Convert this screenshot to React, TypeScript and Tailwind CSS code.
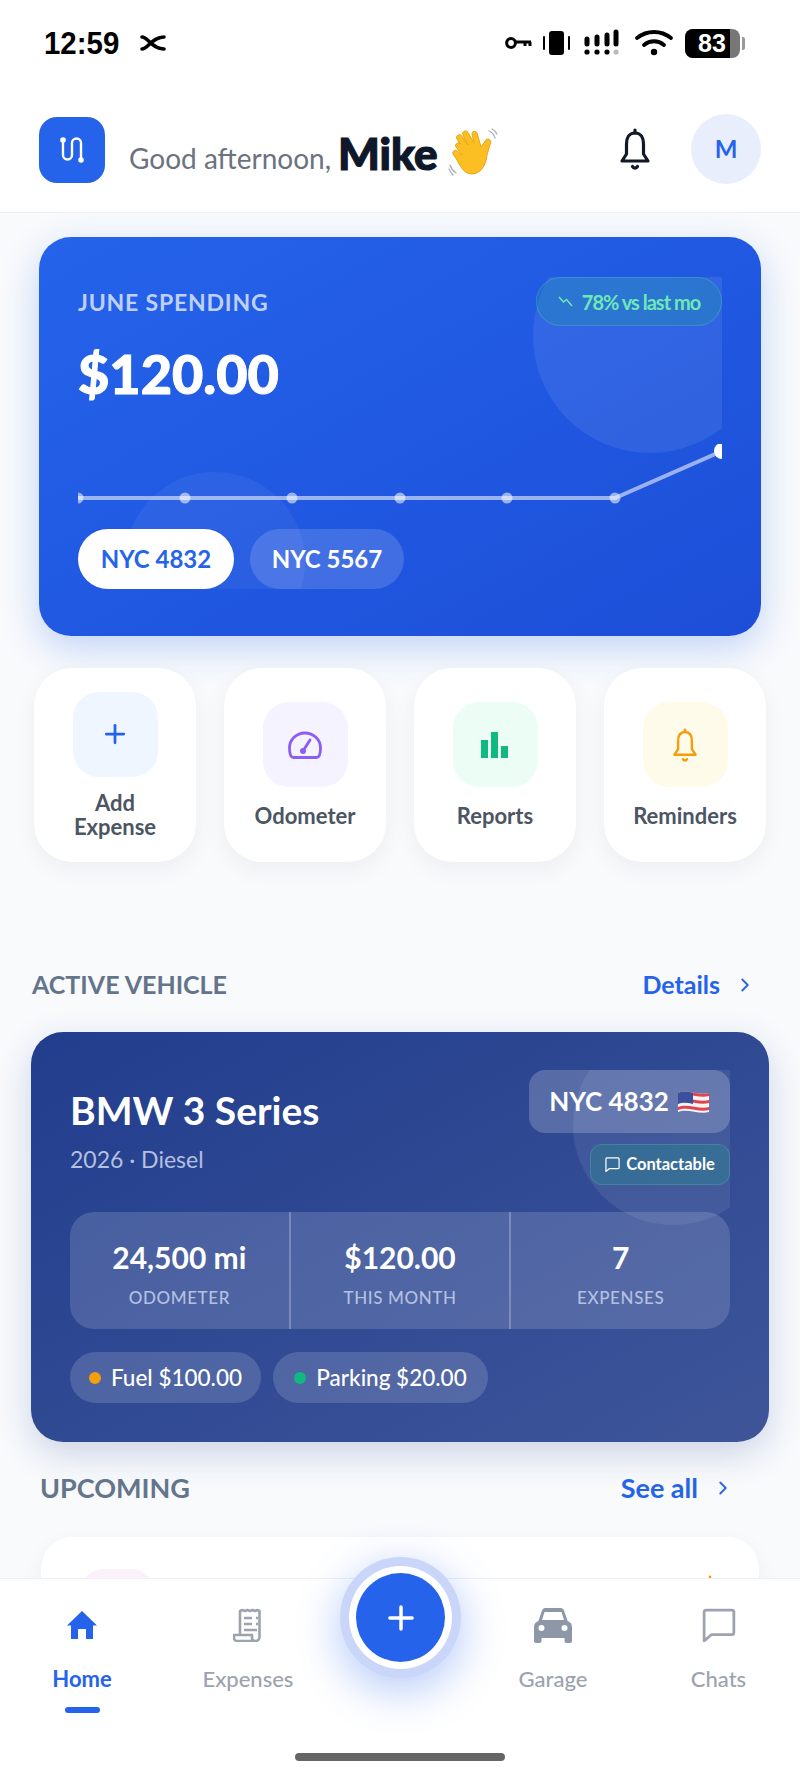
import React from 'react';
import { ChevronRight, Plus } from 'lucide-react';

function BellIcon({ width, height, color, strokeWidth = 3 }: { width: number; height: number; color: string; strokeWidth?: number }) {
  return (
    <svg width={width} height={height} viewBox="0 0 32 42" fill="none" stroke={color} strokeWidth={strokeWidth} strokeLinejoin="round" strokeLinecap="round">
      <path d="M16 2v3" />
      <path d="M16 5C10 5 7.5 10 7.5 16v10L3 33h26l-4.5-7V16C24.500 10 22 5 16 5Z" />
      <path d="M13.500 38.500a2.800 2.800 0 0 0 5 0" />
    </svg>
  );
}

function ChatIcon({ size, color, strokeWidth }: { size: number; color: string; strokeWidth: number }) {
  return (
    <svg width={size} height={size} viewBox="0 0 32 32" fill="none" stroke={color} strokeWidth={strokeWidth} strokeLinejoin="round">
      <path d="M4 2h24a2 2 0 0 1 2 2v19a2 2 0 0 1-2 2H9l-7 6V4a2 2 0 0 1 2-2Z" />
    </svg>
  );
}

function StatusBar() {
  return (
    <div className="h-[76px] flex items-center justify-between pl-[44px] pr-[55px] pt-[10px] bg-white font-['Liberation_Sans',sans-serif]">
      <div className="flex items-center gap-[20px]">
        <span className="text-[32px] font-bold text-black leading-none scale-x-[0.92] origin-left w-[76px] whitespace-nowrap">12:59</span>
        <svg width="26" height="16" viewBox="0 0 26 16" fill="none" stroke="#000" strokeWidth="3.6" strokeLinecap="round">
          <path d="M2 2c6 0 10 12 22 12" />
          <path d="M2 14c6 0 10-12 22-12" />
        </svg>
      </div>
      <div className="flex items-center">
        <svg width="176" height="30" viewBox="0 0 176 30" className="mr-[4px]">
          <g fill="none" stroke="#000" strokeWidth="3">
            <circle cx="6" cy="15" r="4.4" />
            <path d="M11 14h15M20 14v4M25 14v4" />
          </g>
          <rect x="44" y="3" width="15" height="24" rx="3" fill="#000" />
          <path d="M39 9v12M64 9v12" stroke="#000" strokeWidth="2" strokeLinecap="round" />
          <g stroke="#000" strokeWidth="5" strokeLinecap="round">
            <path d="M82 11v5M92 9v7M102 7v9M111 4v12" />
          </g>
          <circle cx="82" cy="24" r="2.6" />
          <circle cx="92" cy="24" r="2.6" />
          <circle cx="102" cy="24" r="2.6" />
          <circle cx="111" cy="24" r="2.6" fill="#bbb" />
          <g fill="none" stroke="#000" strokeWidth="3.8" strokeLinecap="round">
            <path d="M132 10c10-8 24-8 34 0" />
            <path d="M139 17c6-5 14-5 20 0" />
          </g>
          <circle cx="149" cy="24" r="3.2" />
        </svg>
        <div className="flex items-center gap-[2px]">
          <div className="w-[55px] h-[29px] rounded-[8px] bg-[#777] overflow-hidden">
            <div className="w-[45px] h-full bg-black flex items-center justify-center text-white text-[25px] font-bold leading-none pl-[9px]">83</div>
          </div>
          <div className="w-[3px] h-[13px] rounded-r-[2px] bg-[#999]" />
        </div>
      </div>
    </div>
  );
}

function WaveHand() {
  return (
    <svg width="50" height="50" viewBox="0 0 50 50" fill="none">
      <path d="M14 27 L8 19 a2.6 2.6 0 0 1 4.4-2.8 L9 11 a2.8 2.8 0 0 1 4.8-2.9 L20 17 L15 7 a2.8 2.8 0 0 1 5-2.6 L26 15 L24 6 a2.6 2.6 0 0 1 5-1.2 L33 19 L38 12 a2.7 2.7 0 0 1 4.6 2.6 L39 27 C38 38 32 46 24 46 C17 46 13 40 9 32 L5 26 a2.6 2.6 0 0 1 4.3-2.8 Z" fill="#fbbf24" stroke="#eda30f" strokeWidth="1" />
      <path d="M41 3c3 1 5 4 6 7M44 1c2 1 4 3 5 5M2 37c1 3 3 6 6 8M1 41c1 2 2 4 4 6" stroke="#a8b0bc" strokeWidth="1.3" strokeLinecap="round" />
    </svg>
  );
}

function Header() {
  return (
    <div className="h-[137px] flex items-start justify-between pl-[39px] pr-[39px] bg-white border-b border-[#eceff3] shrink-0">
      <div className="flex items-start mt-[41px]">
        <div className="w-[66px] h-[66px] rounded-[18px] bg-[#2563eb] flex items-center justify-center">
          <svg width="30" height="32" viewBox="0 0 30 32" fill="none" stroke="#fff" strokeWidth="2.4" strokeLinecap="round">
            <circle cx="6" cy="6" r="2.8" fill="#fff" stroke="none" />
            <path d="M6 6v15a4.5 4.5 0 0 0 9 0V9a4.5 4.5 0 0 1 9 0v17" />
            <circle cx="24" cy="26" r="2.8" fill="#fff" stroke="none" />
          </svg>
        </div>
        <div className="flex items-center ml-[24px] mt-[11px] h-[50px] whitespace-nowrap">
          <span className="text-[28px] text-[#6b7280] mt-[10px]">Good afternoon,</span>
          <span className="text-[44px] font-black text-[#0f172a] ml-[7px] leading-none [-webkit-text-stroke:1.2px_#0f172a]">Mike</span>
          <span className="ml-[10px]"><WaveHand /></span>
        </div>
      </div>
      <div className="flex items-center mt-[38px]">
        <span className="mr-[40px]"><BellIcon width={32} height={42} color="#111827" strokeWidth={3.2} /></span>
        <div className="w-[70px] h-[70px] rounded-full bg-[#e8eefb] flex items-center justify-center text-[#2563eb] text-[24px] font-bold">M</div>
      </div>
    </div>
  );
}

function SpendChart() {
  const xs = [0, 107, 214, 322, 429, 537, 644];
  const ys = [54, 54, 54, 54, 54, 54, 7];
  const points = xs.map((x, i) => `${x},${ys[i]}`).join(' ');
  return (
    <svg width="644" height="64" viewBox="0 0 644 64" className="block mt-[40px] overflow-hidden">
      <polyline points={points} fill="none" stroke="#fff" strokeOpacity="0.55" strokeWidth="4" />
      {xs.slice(0, 6).map((x) => (
        <circle key={x} cx={x} cy={54} r={5.5} fill="#fff" fillOpacity="0.55" />
      ))}
      <circle cx={644} cy={7} r={8} fill="#fff" />
    </svg>
  );
}

function SpendingCard() {
  return (
    <div className="mx-[39px] mt-[24px] rounded-[32px] bg-linear-to-br from-[#2563eb] to-[#1d4ed8] px-[39px] pt-[40px] pb-[47px] shadow-[0_12px_36px_rgba(37,99,235,0.25)]">
      <div className="relative overflow-hidden">
        <div className="absolute top-[-58px] right-[-45px] w-[234px] h-[234px] rounded-full bg-white/[0.08]" />
        <div className="absolute top-[195px] left-[47px] w-[180px] h-[180px] rounded-full bg-white/[0.05]" />
        <div className="relative">
          <div className="flex justify-between items-start">
            <div className="text-[23px] leading-[28px] mt-[11px] font-bold tracking-[0.8px] text-[#bfd0fb]">JUNE SPENDING</div>
            <div className="h-[49px] w-[186px] rounded-full bg-[rgba(16,185,129,0.2)] border border-[rgba(110,231,183,0.22)] flex items-center justify-center gap-[8px] text-[20px] font-bold tracking-[-1px] text-[#6ee7b7]">
              <svg width="16" height="12" viewBox="0 0 16 12" fill="none" stroke="#6ee7b7" strokeWidth="1.6">
                <path d="M1 1l4.500 5 3-2.500L14 10" />
              </svg>
              <span>78% vs last mo</span>
            </div>
          </div>
          <div className="text-[54px] leading-[60px] font-black text-white mt-[18px] [-webkit-text-stroke:1px_#fff]">$120.00</div>
          <SpendChart />
          <div className="flex gap-[16px] mt-[21px] text-[24px] font-bold">
            <div className="w-[156px] h-[60px] rounded-full bg-white text-[#2563eb] flex items-center justify-center">NYC 4832</div>
            <div className="w-[154px] h-[60px] rounded-full bg-white/15 text-white flex items-center justify-center">NYC 5567</div>
          </div>
        </div>
      </div>
    </div>
  );
}

function QuickCard({ tile, label, icon, offset }: { tile: string; label: React.ReactNode; icon: React.ReactNode; offset?: boolean }) {
  return (
    <div className={`h-[194px] rounded-[38px] bg-white shadow-[0_8px_24px_rgba(15,23,42,0.05)] flex flex-col items-center justify-center ${offset ? 'gap-[14px]' : 'gap-[17px]'}`}>
      <div className={`w-[85px] h-[85px] rounded-[26px] flex items-center justify-center ${tile}`}>{icon}</div>
      <div className="text-[22px] leading-[24px] font-bold text-[#4b5563] text-center">{label}</div>
    </div>
  );
}

function QuickActions() {
  return (
    <div className="mx-[34px] mt-[32px] grid grid-cols-4 gap-[28px]">
      <QuickCard
        offset
        tile="bg-[#eff6ff]"
        label={<>Add<br />Expense</>}
        icon={<Plus size={30} strokeWidth={2.2} className="text-[#2563eb]" />}
      />
      <QuickCard
        tile="bg-[#f5f3ff]"
        label="Odometer"
        icon={
          <svg width="34" height="28" viewBox="0 0 34 28" fill="none" stroke="#8b5cf6" strokeWidth="2.8" strokeLinecap="round" strokeLinejoin="round">
            <path d="M5 26.500h24c2-.5 3.500-4 3.500-9.500C32.500 8.500 25.500 2 17 2S1.500 8.500 1.500 17c0 5.500 1.500 9 3.500 9.500Z" />
            <path d="M15 20 22 9" />
            <circle cx="15" cy="20" r="1.600" fill="#8b5cf6" />
          </svg>
        }
      />
      <QuickCard
        tile="bg-[#ecfdf5]"
        label="Reports"
        icon={
          <svg width="28" height="28" viewBox="0 0 28 28" fill="#10b981">
            <rect x="0" y="9" width="7" height="18" />
            <rect x="10" y="1" width="7" height="26" />
            <rect x="20" y="15" width="7" height="12" />
          </svg>
        }
      />
      <QuickCard tile="bg-[#fffbeb]" label="Reminders" icon={<BellIcon width={28} height={34} color="#f59e0b" strokeWidth={3} />} />
    </div>
  );
}

function SectionHead({ title, action, className }: { title: string; action: string; className: string }) {
  return (
    <div className={`flex items-center justify-between h-[30px] ${className}`}>
      <div className="font-bold text-[#64748b]">{title}</div>
      <div className="flex items-center gap-[14px] text-[#2563eb] font-bold">
        {action}
        <ChevronRight size={22} strokeWidth={2} />
      </div>
    </div>
  );
}

function Stat({ value, label, divided }: { value: string; label: string; divided?: boolean }) {
  return (
    <div className={`flex-1 flex flex-col items-center pt-[28px] ${divided ? 'border-l-2 border-white/25' : ''}`}>
      <div className="text-[30px] leading-[34px] font-bold text-white">{value}</div>
      <div className="text-[17px] leading-[22px] mt-[13px] tracking-[0.6px] font-medium text-[#b4c0e0]">{label}</div>
    </div>
  );
}

function VehicleCard() {
  return (
    <div className="mx-[31px] mt-[32px] rounded-[32px] bg-linear-to-br from-[#213d8d] to-[#3e5599] px-[39px] pt-[38px] pb-[39px] shadow-[0_12px_36px_rgba(30,58,138,0.2)]">
      <div className="relative overflow-hidden">
        <div className="absolute top-[-45px] right-[-43px] w-[200px] h-[200px] rounded-full bg-white/[0.08]" />
        <div className="relative">
          <div className="flex justify-between items-start h-[115px]">
            <div>
              <div className="text-[39px] leading-[46px] font-bold text-white mt-[17px]">BMW 3 Series</div>
              <div className="text-[23px] leading-[30px] mt-[11px] text-[#b4c0e0]">2026 · Diesel</div>
            </div>
            <div className="flex flex-col items-end gap-[11px]">
              <div className="w-[201px] h-[63px] rounded-[16px] bg-white/20 flex items-center justify-center gap-[8px] text-[26px] font-bold text-white">
                NYC 4832
                <svg width="33" height="24" viewBox="0 0 33 24">
                  <path d="M1 3c10-4 21 3 31 0v19c-10 3-21-4-31 0z" fill="#f4f4f5" />
                  <path d="M1 3c10-4 21 3 31 0v3c-10 3-21-4-31 0zM1 10c10-4 21 3 31 0v3c-10 3-21-4-31 0zM1 17c10-4 21 3 31 0v3c-10 3-21-4-31 0z" fill="#e0444c" />
                  <path d="M1 3c5-2 10-1 15 0v11c-5-1-10-2-15 0z" fill="#3c4f9e" />
                </svg>
              </div>
              <div className="w-[140px] h-[41px] rounded-[12px] bg-[rgba(16,185,129,0.2)] border border-[rgba(110,231,183,0.2)] flex items-center justify-center gap-[6px] text-[16.500px] font-bold text-white">
                <ChatIcon size={15} color="#fff" strokeWidth={2.6} />
                Contactable
              </div>
            </div>
          </div>
          <div className="mt-[27px] h-[117px] rounded-[24px] bg-white/15 flex">
            <Stat value="24,500 mi" label="ODOMETER" />
            <Stat value="$120.00" label="THIS MONTH" divided />
            <Stat value="7" label="EXPENSES" divided />
          </div>
          <div className="flex gap-[12px] mt-[23px] text-[22.500px] font-medium text-white">
            <div className="w-[191px] h-[51px] rounded-full bg-white/15 flex items-center justify-center gap-[10px]">
              <span className="w-[12px] h-[12px] rounded-full bg-[#f59e0b]" />
              Fuel $100.00
            </div>
            <div className="w-[215px] h-[51px] rounded-full bg-white/15 flex items-center justify-center gap-[10px]">
              <span className="w-[12px] h-[12px] rounded-full bg-[#10b981]" />
              Parking $20.00
            </div>
          </div>
        </div>
      </div>
    </div>
  );
}

function UpcomingPeek() {
  return (
    <div className="mx-[41px] mt-[34px] h-[120px] rounded-[32px] bg-white shadow-[0_8px_24px_rgba(15,23,42,0.05)] pt-[32px] px-[39px] flex justify-between">
      <div className="w-[75px] h-[75px] rounded-[24px] bg-[#faf1fb]" />
      <div className="mt-[6px] mr-[-3px]"><BellIcon width={26} height={32} color="#f59e0b" strokeWidth={3} /></div>
    </div>
  );
}

function NavItem({ label, icon, active }: { label: string; icon: React.ReactNode; active?: boolean }) {
  return (
    <div className="flex flex-col items-center">
      <div className="h-[44px] flex items-center justify-center">{icon}</div>
      <div className={`mt-[19px] text-[22px] leading-[26px] ${active ? 'font-bold text-[#2563eb]' : 'font-medium text-[#9ca3af]'}`}>{label}</div>
      {active && <div className="mt-[15px] w-[35px] h-[6px] rounded-full bg-[#2563eb]" />}
    </div>
  );
}

function BottomNav() {
  return (
    <div className="relative h-[201px] shrink-0 bg-white border-t border-[#eef0f4]">
      <div className="grid grid-cols-[164px_168px_137px_168px_163px] pt-[24px] h-[135px]">
        <NavItem
          active
          label="Home"
          icon={
            <svg width="32" height="30" viewBox="0 0 32 30" fill="#2563eb">
              <path d="M16 1 L31 15.500 H27 V29 H20 V19 H12 V29 H5 V15.500 H1 Z" />
            </svg>
          }
        />
        <NavItem
          label="Expenses"
          icon={
            <svg width="30" height="34" viewBox="0 0 30 34" fill="none" stroke="#9ca3af" strokeWidth="2.600" strokeLinejoin="round">
              <path d="M7 27V3l2.500-1 2.500 1 2.500-1 2.500 1 2.500-1 2.500 1 2.500-1 2 1v26a4 4 0 0 1-4 4H4a3 3 0 0 1-3-3v-3h18v3a3 3 0 0 0 3 3" />
              <path d="M11 10h8M11 16h8M23 10h2M23 16h2M11 22h13" strokeWidth="2.400" />
            </svg>
          }
        />
        <div />
        <NavItem
          label="Garage"
          icon={
            <svg width="40" height="36" viewBox="0 0 40 36" fill="#8d97a8">
              <path d="M9 3.500C9.800 1.600 11.400 1 13 1h14c1.600 0 3.200.6 4 2.500L34.600 14c2.800 1 4.400 3 4.400 6v14a2 2 0 0 1-2 2h-3.500a2 2 0 0 1-2-2v-3h-23v3a2 2 0 0 1-2 2H3a2 2 0 0 1-2-2V20c0-3 1.600-5 4.400-6zM11.500 5 9 13h22l-2.500-8zM8.500 18a3 3 0 1 0 0 6 3 3 0 0 0 0-6zm23 0a3 3 0 1 0 0 6 3 3 0 0 0 0-6z" fillRule="evenodd" />
            </svg>
          }
        />
        <NavItem label="Chats" icon={<ChatIcon size={34} color="#9ca3af" strokeWidth={2.6} />} />
      </div>
      <div className="mt-[39px] mx-auto w-[210px] h-[8px] rounded-full bg-[#666666]" />
      {/* floating add button sits over the nav edge */}
      <div className="absolute left-[356px] top-[-6px] w-[89px] h-[89px] rounded-full bg-[#2563eb] flex items-center justify-center shadow-[0_0_0_7px_#fff,0_0_0_16px_#c9d6f9,0_12px_44px_18px_rgba(37,99,235,0.32)]">
        <Plus size={38} strokeWidth={2.2} className="text-white" />
      </div>
    </div>
  );
}

export default function App() {
  return (
    <div className="w-[800px] h-[1779px] flex flex-col overflow-hidden bg-[#f8fafc] font-['Lato',sans-serif]">
      <StatusBar />
      <Header />
      <div className="flex-1 overflow-hidden">
        <SpendingCard />
        <QuickActions />
        <SectionHead title="ACTIVE VEHICLE" action="Details" className="mt-[108px] pl-[32px] pr-[44px] text-[25px]" />
        <VehicleCard />
        <SectionHead title="UPCOMING" action="See all" className="mt-[31px] pl-[40px] pr-[66px] text-[27px]" />
        <UpcomingPeek />
      </div>
      <BottomNav />
    </div>
  );
}
